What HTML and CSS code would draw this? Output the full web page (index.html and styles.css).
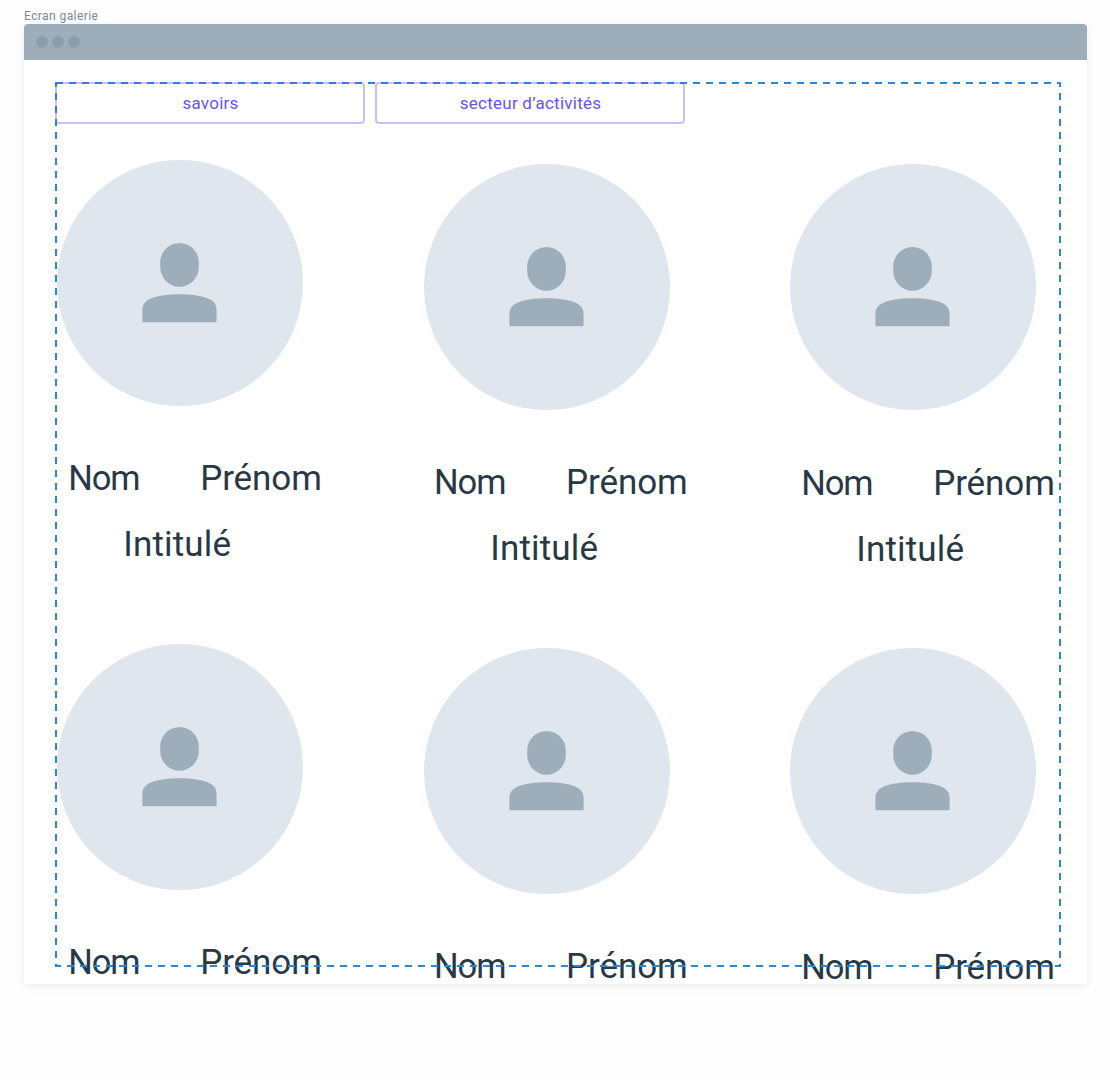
FILE: index.html
```
<!DOCTYPE html>
<html lang="fr">
<head>
<meta charset="utf-8">
<title>Ecran galerie</title>
<link rel="stylesheet" href="styles.css">
</head>
<body>
<svg class="defs" width="0" height="0" aria-hidden="true">
  <symbol id="person" viewBox="0.5 -0.4 76 80" overflow="visible">
    <rect x="18.7" y="0.5" width="38.6" height="43.8" rx="19.3" ry="19.8"/>
    <path d="M0.9 78V68C0.9 62 4 58 10 55.8C17 53 27 51.8 38 51.8S59 53 66 55.8C72 58 75.100 62 75.100 68V79Q75.100 79.800 74.300 79.800H1.700Q0.900 79.800 0.900 79Z"/>
  </symbol>
</svg>
<p class="label">Ecran galerie</p>
<main class="window">
  <header class="titlebar"><i></i><i></i><i></i></header>
  <div class="screen">
    <svg class="selection" width="1006" height="885"><rect x="1" y="1" width="1004" height="883"/></svg>
    <nav class="filters">
      <button class="filter">savoirs</button>
      <button class="filter">secteur d’activités</button>
    </nav>
    <section class="gallery">
      <article class="card"><div class="avatar"><svg><use href="#person"/></svg></div><div class="names"><span class="nom">Nom</span><span class="prenom">Prénom</span></div><p class="role">Intitulé</p></article>
      <article class="card second"><div class="avatar"><svg><use href="#person"/></svg></div><div class="names"><span class="nom">Nom</span><span class="prenom">Prénom</span></div><p class="role">Intitulé</p></article>
      <article class="card third"><div class="avatar"><svg><use href="#person"/></svg></div><div class="names"><span class="nom">Nom</span><span class="prenom">Prénom</span></div><p class="role">Intitulé</p></article>
      <article class="card"><div class="avatar"><svg><use href="#person"/></svg></div><div class="names"><span class="nom">Nom</span><span class="prenom">Prénom</span></div></article>
      <article class="card second"><div class="avatar"><svg><use href="#person"/></svg></div><div class="names"><span class="nom">Nom</span><span class="prenom">Prénom</span></div></article>
      <article class="card third"><div class="avatar"><svg><use href="#person"/></svg></div><div class="names"><span class="nom">Nom</span><span class="prenom">Prénom</span></div></article>
    </section>
  </div>
</main>
</body>
</html>
```
FILE: styles.css
```
* { box-sizing: border-box; }
body {
  margin: 0;
  min-height: 1080px;
  padding: 8px 0 0 24px;
  background: #fefefe;
  font-family: Roboto, "Liberation Sans", sans-serif;
  color: #293845;
}
p { margin: 0; }
.defs { display: block; }
.label { height: 16px; font-size: 12px; line-height: 16px; letter-spacing: 0.42px; color: #788896; }
.window {
  width: 1062.6px;
  height: 960px;
  border-radius: 4px 4px 0 0;
  background: #fff;
  box-shadow: 0 2px 10px rgba(0, 0, 0, 0.08);
}
.titlebar {
  display: flex;
  align-items: center;
  gap: 4px;
  height: 36px;
  padding-left: 12px;
  border-radius: 4px 4px 0 0;
  background: #9eadba;
}
.titlebar i { width: 12px; height: 12px; border-radius: 50%; background: #8e9dab; }
.screen { position: relative; height: 924px; padding: 22px 0 0 31px; }
.selection { position: absolute; z-index: 1; top: 22px; left: 31px; pointer-events: none; }
.selection rect { fill: none; stroke: #2b88d9; stroke-width: 2; stroke-dasharray: 7 6; }
.filters { position: relative; z-index: 2; display: flex; gap: 10px; }
.filter {
  width: 310px;
  height: 42px;
  padding: 0 0 1px 1px;
  border: 2px solid rgba(99, 79, 245, 0.36);
  border-radius: 4px;
  background: none;
  color: #6554f2;
  font: 17px Roboto, "Liberation Sans", sans-serif;
  letter-spacing: 0.25px;
}
.gallery {
  display: grid;
  grid-template-columns: 366.5px 366.5px 270px;
  grid-template-rows: 484px 342px;
  padding: 36px 0 0 2px;
}
.second,
.third { padding-top: 4px; }
.avatar {
  width: 246.4px;
  height: 246.4px;
  padding: 82.4px 0 0 85px;
  border-radius: 50%;
  background: #dfe6ee;
}
.avatar svg { display: block; width: 76px; height: 80px; overflow: visible; fill: #9eadba; }
.second .avatar svg { margin-left: 0.6px; }
.names {
  display: flex;
  align-items: baseline;
  padding: 56.6px 0 0 11.2px;
  font-size: 35px;
  line-height: 30px;
  white-space: nowrap;
}
.second .names { padding-left: 10.6px; }
.third .names { padding-top: 57.6px; }
.nom { width: 132px; font-size: 34.5px; letter-spacing: -1.1px; }
.prenom { letter-spacing: -0.1px; }
.role {
  margin-top: 36px;
  padding-left: 66.3px;
  font-size: 35px;
  line-height: 30px;
  letter-spacing: 0.15px;
}
.second .role { padding-left: 66.8px; }
```
